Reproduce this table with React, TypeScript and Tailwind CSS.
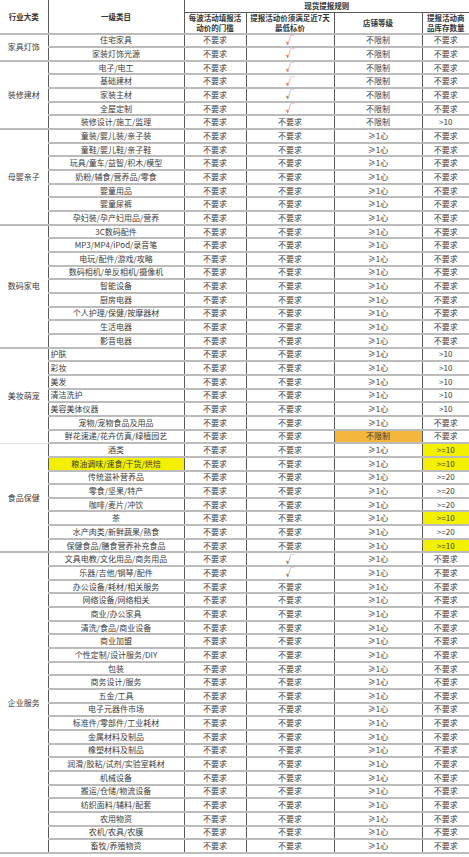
import React from "react";

type Row = {
  name: string;
  c4?: "red" | "gray";
  c5: string;
  c5Orange?: boolean;
  c6: string;
  c6Yellow?: boolean;
  c2Yellow?: boolean;
  left?: boolean;
};

type Group = { name: string; rows: Row[]; faint?: boolean };

const heart = "≥1心";

const groups: Group[] = [
  {
    name: "家具灯饰",
    rows: [
      { name: "住宅家具", c4: "red", c5: "不限制", c6: "不要求" },
      { name: "家装灯饰光源", c4: "red", c5: "不限制", c6: "不要求" },
    ],
  },
  {
    name: "装修建材",
    rows: [
      { name: "电子/电工", c4: "red", c5: "不限制", c6: "不要求" },
      { name: "基础建材", c4: "red", c5: "不限制", c6: "不要求" },
      { name: "家装主材", c4: "gray", c5: "不限制", c6: "不要求" },
      { name: "全屋定制", c4: "red", c5: "不限制", c6: "不要求" },
      { name: "装修设计/施工/监理", c5: "不限制", c6: ">10" },
    ],
  },
  {
    name: "母婴亲子",
    rows: [
      "童装/婴儿装/亲子装",
      "童鞋/婴儿鞋/亲子鞋",
      "玩具/童车/益智/积木/模型",
      "奶粉/辅食/营养品/零食",
      "婴童用品",
      "婴童尿裤",
      "孕妇装/孕产妇用品/营养",
    ].map((n) => ({ name: n, c5: heart, c6: "不要求" })),
  },
  {
    name: "数码家电",
    rows: [
      "3C数码配件",
      "MP3/MP4/iPod/录音笔",
      "电玩/配件/游戏/攻略",
      "数码相机/单反相机/摄像机",
      "智能设备",
      "厨房电器",
      "个人护理/保健/按摩器材",
      "生活电器",
      "影音电器",
    ].map((n) => ({ name: n, c5: heart, c6: "不要求" })),
  },
  {
    name: "美妆萌宠",
    faint: true,
    rows: [
      { name: "护肤", c5: heart, c6: ">10", left: true },
      { name: "彩妆", c5: heart, c6: ">10", left: true },
      { name: "美发", c5: heart, c6: ">10", left: true },
      { name: "清洁洗护", c5: heart, c6: ">10", left: true },
      { name: "美容美体仪器", c5: heart, c6: ">10", left: true },
      { name: "宠物/宠物食品及用品", c5: heart, c6: "不要求" },
      { name: "鲜花速递/花卉仿真/绿植园艺", c5: "不限制", c5Orange: true, c6: "不要求" },
    ],
  },
  {
    name: "食品保健",
    rows: [
      { name: "酒类", c5: heart, c6: ">=10", c6Yellow: true },
      { name: "粮油调味/速食/干货/烘焙", c5: heart, c6: ">=10", c6Yellow: true, c2Yellow: true },
      { name: "传统滋补营养品", c5: heart, c6: ">=20" },
      { name: "零食/坚果/特产", c5: heart, c6: ">=20" },
      { name: "咖啡/麦片/冲饮", c5: heart, c6: ">=20" },
      { name: "茶", c5: heart, c6: ">=10", c6Yellow: true },
      { name: "水产肉类/新鲜蔬果/熟食", c5: heart, c6: ">=20" },
      { name: "保健食品/膳食营养补充食品", c5: heart, c6: ">=10", c6Yellow: true },
    ],
  },
  {
    name: "企业服务",
    rows: [
      { name: "文具电教/文化用品/商务用品", c4: "gray", c5: heart, c6: "不要求" },
      { name: "乐器/吉他/钢琴/配件", c4: "gray", c5: heart, c6: "不要求" },
      ...[
        "办公设备/耗材/相关服务",
        "网络设备/网络相关",
        "商业/办公家具",
        "清洗/食品/商业设备",
        "商业加盟",
        "个性定制/设计服务/DIY",
        "包装",
        "商务设计/服务",
        "五金/工具",
        "电子元器件市场",
        "标准件/零部件/工业耗材",
        "金属材料及制品",
        "橡塑材料及制品",
        "润滑/胶粘/试剂/实验室耗材",
        "机械设备",
        "搬运/仓储/物流设备",
        "纺织面料/辅料/配套",
        "农用物资",
        "农机/农具/农膜",
        "畜牧/养殖物资",
      ].map((n) => ({ name: n, c5: heart, c6: "不要求" })),
    ],
  },
];

const td = "border-b-2 border-b-[#bcbcbc] border-r border-r-[#5a5a5a] p-0 text-center align-middle whitespace-nowrap overflow-hidden";
const th = "p-0 text-[7.5px] font-semibold text-[#333] align-middle";

export default function App() {
  return (
    <div className="w-[469px] h-[857px] bg-white overflow-hidden font-['Noto_Sans_CJK_SC','Noto_Sans',sans-serif] text-[#3a3a3a]">
      <table className="table-fixed border-collapse w-[469px] text-[8px] leading-none">
        <colgroup>
          <col className="w-[48px]" />
          <col className="w-[136px]" />
          <col className="w-[62px]" />
          <col className="w-[88px]" />
          <col className="w-[88px]" />
          <col className="w-[47px]" />
        </colgroup>
        <thead>
          <tr className="h-[12px]">
            <th rowSpan={2} className={`${th} border-b-2 border-b-[#bcbcbc] border-r border-r-[#5a5a5a]`}>
              行业大类
            </th>
            <th rowSpan={2} className={`${th} border-b-2 border-b-[#bcbcbc] border-r border-r-[#5a5a5a]`}>
              一级类目
            </th>
            <th colSpan={4} className={`${th} border-b border-b-[#5a5a5a]`}>
              现货提报规则
            </th>
          </tr>
          <tr className="h-[21px]">
            <th className={`${th} leading-[10px] border-b-2 border-b-[#bcbcbc] border-r border-r-[#5a5a5a]`}>
              <div>每波活动填报活</div>
              <div>动价的门槛</div>
            </th>
            <th className={`${th} leading-[10px] border-b-2 border-b-[#bcbcbc] border-r border-r-[#5a5a5a]`}>
              <div>提报活动价须满足近7天</div>
              <div>最低标价</div>
            </th>
            <th className={`${th} border-b-2 border-b-[#bcbcbc] border-r border-r-[#5a5a5a]`}>店铺等级</th>
            <th className={`${th} leading-[10px] border-b-2 border-b-[#bcbcbc]`}>
              <div>提报活动商</div>
              <div>品库存数量</div>
            </th>
          </tr>
        </thead>
        <tbody>
          {groups.map((g) =>
            g.rows.map((r, i) => (
              <tr key={g.name + r.name} className="h-[13.66px]">
                {i === 0 && (
                  <td
                    rowSpan={g.rows.length}
                    className={`border-r border-r-[#5a5a5a] p-0 text-center align-middle ${
                      g.faint ? "border-b border-b-[#e2e2e2]" : "border-b-2 border-b-[#bcbcbc]"
                    }`}
                  >
                    {g.name}
                  </td>
                )}
                <td className={`${td} ${r.left ? "text-left pl-[2px]" : ""} ${r.c2Yellow ? "bg-[#f3f100]" : ""}`}>
                  {r.name}
                </td>
                <td className={td}>不要求</td>
                <td className={td}>
                  {r.c4 === "red" ? (
                    <span className="text-[9px] text-[#e8322a]">√</span>
                  ) : r.c4 === "gray" ? (
                    <span className="text-[9px] text-[#555]">√</span>
                  ) : (
                    "不要求"
                  )}
                </td>
                <td className={`${td} ${r.c5Orange ? "bg-[#f5b73b]" : ""}`}>{r.c5}</td>
                <td className={`border-b-2 border-b-[#bcbcbc] p-0 text-center align-middle whitespace-nowrap ${r.c6Yellow ? "bg-[#f3f100]" : ""}`}>
                  {r.c6}
                </td>
              </tr>
            ))
          )}
        </tbody>
      </table>
    </div>
  );
}
